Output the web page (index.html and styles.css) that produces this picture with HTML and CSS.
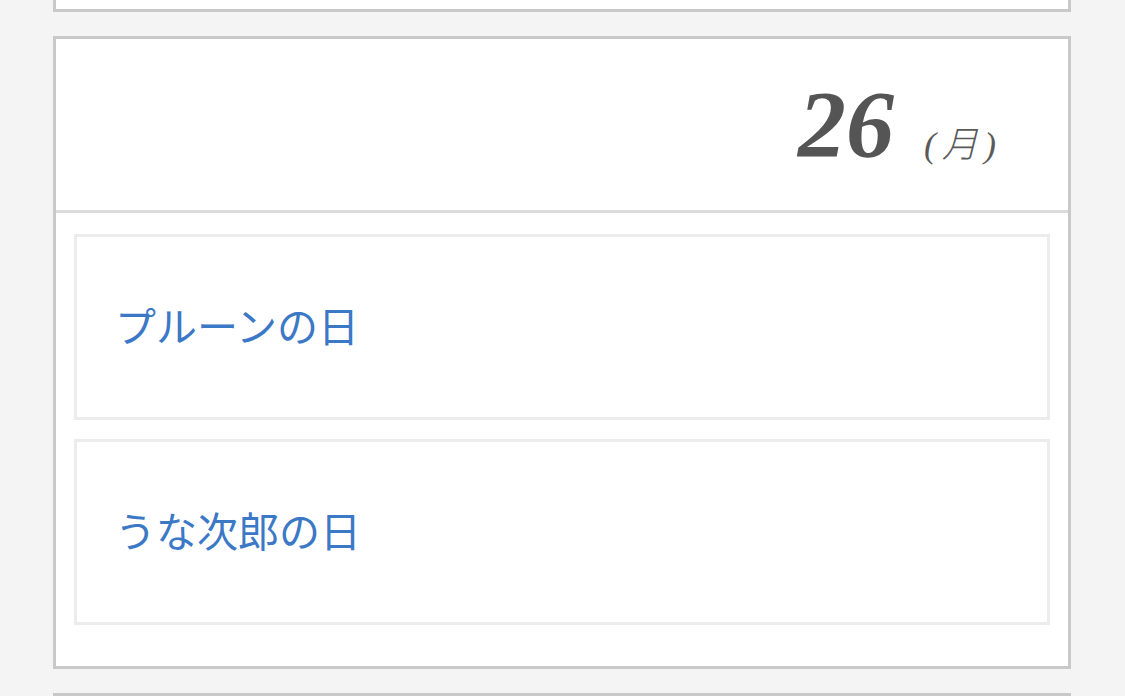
FILE: index.html
```html
<!DOCTYPE html>
<html lang="ja">
<head>
<meta charset="utf-8">
<title>記念日カレンダー</title>
<link rel="stylesheet" href="styles.css">
</head>
<body>
<main class="days">
  <section class="day day--prev"></section>
  <section class="day">
    <header class="day-head">
      <span class="day-num">26</span>
      <span class="day-week">(月)</span>
    </header>
    <ul class="events">
      <li class="event"><a class="event-link" href="#">プルーンの日</a></li>
      <li class="event"><a class="event-link" href="#">うな次郎の日</a></li>
    </ul>
  </section>
  <section class="day day--next"></section>
</main>
</body>
</html>
```

FILE: styles.css
```css
html, body {
  margin: 0;
  padding: 0;
  background: #f4f4f4;
  height: 696px;
  overflow: hidden;
}

.days {
  width: 1018px;
  margin-left: 53px;
  display: flex;
  flex-direction: column;
  gap: 24px;
}

.day {
  background: #fff;
  border: 3px solid #c9c9c9;
}

.day--prev {
  border-top: 0;
  height: 9px;
}

.day--next {
  border-bottom: 0;
  height: 40px;
}

.day-head {
  height: 174px;
  box-sizing: border-box;
  border-bottom: 3px solid #dcdcdc;
  display: flex;
  justify-content: flex-end;
  align-items: baseline;
  padding: 38px 72px 0 0;
  color: #555;
}

.day-num {
  font-family: "Liberation Serif", "Times New Roman", serif;
  font-style: italic;
  font-weight: bold;
  font-size: 96px;
  line-height: 1;
  margin-right: 30px;
}

.day-week {
  font-family: "Liberation Serif", "Noto Sans CJK JP", serif;
  font-style: italic;
  font-weight: 300;
  font-size: 36px;
  line-height: 1;
  letter-spacing: 6px;
  margin-right: -6px;
  color: #5a5a5a;
}

.events {
  list-style: none;
  margin: 0;
  padding: 21px 18px 41px;
  display: flex;
  flex-direction: column;
  gap: 19px;
}

.event {
  height: 180px;
  box-sizing: content-box;
  border: 3px solid #ececec;
  display: flex;
  align-items: center;
  padding-left: 38px;
}

.event-link {
  font-family: "Noto Sans CJK JP", "Noto Sans", sans-serif;
  font-size: 41px;
  color: #3b78c6;
  text-decoration: none;
  line-height: 1;
  margin-bottom: 6px;
}
```
